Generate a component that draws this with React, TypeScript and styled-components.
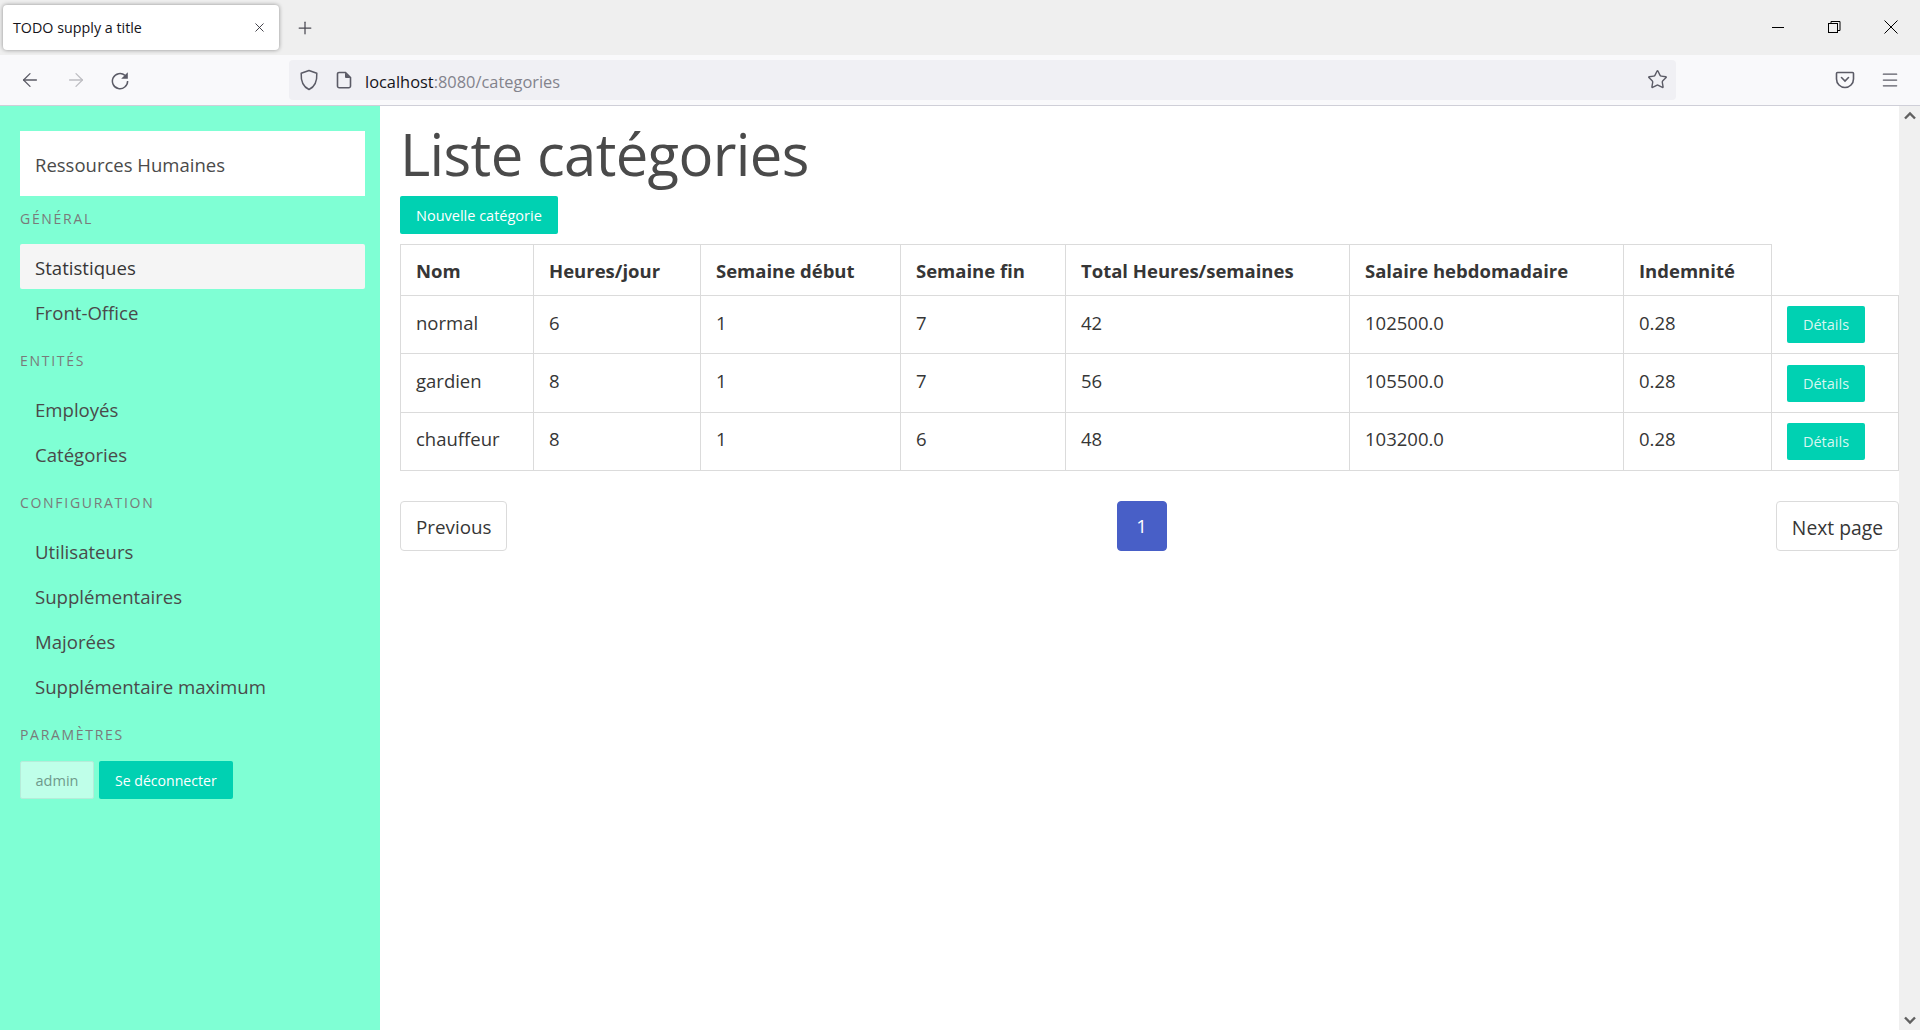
import React from "react";
import styled, { createGlobalStyle } from "styled-components";
import { ArrowLeft, ArrowRight, Menu, Plus, Star, X } from "lucide-react";

const GlobalStyle = createGlobalStyle`
  html, body {
    margin: 0;
    height: 100%;
    overflow: hidden;
    background: #fff;
    font-family: "Open Sans", "Noto Sans", sans-serif;
    color: #4a4a4a;
  }
  * { box-sizing: border-box; }
`;

interface Category {
  nom: string;
  heures: number;
  debut: number;
  fin: number;
  total: number;
  salaire: string;
  indemnite: string;
}

const categories: Category[] = [
  { nom: "normal", heures: 6, debut: 1, fin: 7, total: 42, salaire: "102500.0", indemnite: "0.28" },
  { nom: "gardien", heures: 8, debut: 1, fin: 7, total: 56, salaire: "105500.0", indemnite: "0.28" },
  { nom: "chauffeur", heures: 8, debut: 1, fin: 6, total: 48, salaire: "103200.0", indemnite: "0.28" },
];

const headers = ["Nom", "Heures/jour", "Semaine début", "Semaine fin", "Total Heures/semaines", "Salaire hebdomadaire", "Indemnité"];
const colWidths = [133, 167, 200, 165, 284, 274, 148, 127];

const menu = [
  { label: "Général", items: ["Statistiques", "Front-Office"] },
  { label: "Entités", items: ["Employés", "Catégories"] },
  { label: "Configuration", items: ["Utilisateurs", "Supplémentaires", "Majorées", "Supplémentaire maximum"] },
];

const App = () => {
  return (
    <>
      <GlobalStyle />
      <Page>
        <TabStrip>
          <Tab>
            <TabTitle>TODO supply a title</TabTitle>
            <X size={15} strokeWidth={1.4} color="#2b2a33" />
          </Tab>
          <NewTab>
            <Plus size={20} strokeWidth={1.5} color="#4a4952" />
          </NewTab>
          <WindowControls>
            <WindowButton>
              <svg width="16" height="16" viewBox="0 0 16 16"><path d="M2 8.5h12" stroke="#000" strokeWidth="1" /></svg>
            </WindowButton>
            <WindowButton>
              <svg width="16" height="16" viewBox="0 0 16 16" fill="none" stroke="#000" strokeWidth="1"><rect x="2.5" y="4.5" width="9" height="9" /><path d="M5 4.5V2.5h9v9h-2.5" /></svg>
            </WindowButton>
            <WindowButton>
              <svg width="16" height="16" viewBox="0 0 16 16"><path d="M1.5 1.5l13 13M14.5 1.5l-13 13" stroke="#000" strokeWidth="1" /></svg>
            </WindowButton>
          </WindowControls>
        </TabStrip>
        <Toolbar>
          <NavIcons>
            <ArrowLeft size={22} strokeWidth={1.4} color="#5b5b66" />
            <ArrowRight size={22} strokeWidth={1.4} color="#bdbdc2" />
            <svg width="20" height="20" viewBox="0 0 20 20" fill="none">
              <path d="M15 5.4A7.6 7.6 0 1 0 17.6 11" stroke="#5b5b66" strokeWidth="1.5" />
              <path d="M17.8 2.2v6.6h-6.6z" fill="#5b5b66" />
            </svg>
          </NavIcons>
          <UrlBar>
            <svg width="20" height="22" viewBox="0 0 20 22" fill="none" stroke="#5b5b66" strokeWidth="1.5">
              <path d="M10 1.5l7.8 2.8c.4 7.6-1.4 13.4-7.8 16.2C3.6 17.7 1.8 11.9 2.2 4.3z" strokeLinejoin="round" />
            </svg>
            <svg width="16" height="18" viewBox="0 0 16 18">
              <path d="M3 1.5h6.5l5 5V15a1.8 1.8 0 0 1-1.8 1.8H3.3A1.8 1.8 0 0 1 1.5 15V3A1.5 1.5 0 0 1 3 1.5z" fill="none" stroke="#5b5b66" strokeWidth="1.6" />
              <path d="M9 1.5l5.5 5.5H10a1 1 0 0 1-1-1z" fill="#5b5b66" />
            </svg>
            <UrlText>
              localhost<UrlMuted>:8080/categories</UrlMuted>
            </UrlText>
            <UrlEnd>
              <Star size={21} strokeWidth={1.6} color="#5b5b66" />
            </UrlEnd>
          </UrlBar>
          <PocketIcon>
            <svg width="20" height="20" viewBox="0 0 20 20" fill="none" stroke="#5b5b66" strokeWidth="1.6">
              <path d="M2.5 2.5h15c.6 0 1 .4 1 1V9a8.5 8.5 0 0 1-17 0V3.5c0-.6.4-1 1-1z" />
              <path d="M6.5 7.5l3.5 3.5 3.5-3.5" strokeLinecap="round" />
            </svg>
          </PocketIcon>
          <MenuIcon>
            <Menu size={20} strokeWidth={1.5} color="#5b5b66" />
          </MenuIcon>
        </Toolbar>
        <Body>
          <Sidebar>
            <Brand>Ressources Humaines</Brand>
            {menu.map((section, i) => (
              <React.Fragment key={section.label}>
                <MenuLabel $first={i === 0}>{section.label}</MenuLabel>
                {section.items.map((item) => (
                  <MenuItem key={item} $active={item === "Statistiques"}>
                    {item}
                  </MenuItem>
                ))}
              </React.Fragment>
            ))}
            <MenuLabel>Paramètres</MenuLabel>
            <UserRow>
              <AdminButton>admin</AdminButton>
              <LogoutButton>Se déconnecter</LogoutButton>
            </UserRow>
          </Sidebar>
          <Main>
            <Title>Liste catégories</Title>
            <PrimaryButton>Nouvelle catégorie</PrimaryButton>
            <Table>
              <colgroup>
                {colWidths.map((w, i) => (
                  <col key={i} style={{ width: w }} />
                ))}
              </colgroup>
              <thead>
                <tr>
                  {headers.map((h) => (
                    <Th key={h}>{h}</Th>
                  ))}
                  <EmptyTh />
                </tr>
              </thead>
              <tbody>
                {categories.map((c) => (
                  <Row key={c.nom}>
                    <Td>{c.nom}</Td>
                    <Td>{c.heures}</Td>
                    <Td>{c.debut}</Td>
                    <Td>{c.fin}</Td>
                    <Td>{c.total}</Td>
                    <Td>{c.salaire}</Td>
                    <Td>{c.indemnite}</Td>
                    <ActionTd>
                      <DetailButton>Détails</DetailButton>
                    </ActionTd>
                  </Row>
                ))}
              </tbody>
            </Table>
            <Pagination>
              <PageLink>Previous</PageLink>
              <CurrentPage>1</CurrentPage>
              <NextLink>Next page</NextLink>
            </Pagination>
          </Main>
          <Scrollbar>
            <svg width="14" height="10" viewBox="0 0 14 10"><path d="M2 7.5l5-5 5 5" fill="none" stroke="#606060" strokeWidth="2.4" /></svg>
            <svg width="14" height="10" viewBox="0 0 14 10"><path d="M2 2.5l5 5 5-5" fill="none" stroke="#606060" strokeWidth="2.4" /></svg>
          </Scrollbar>
        </Body>
      </Page>
    </>
  );
};

export default App;

const Page = styled.div`
  display: flex;
  flex-direction: column;
  height: 1030px;
`;

const TabStrip = styled.div`
  display: flex;
  align-items: flex-start;
  height: 55px;
  padding: 5px 0 0 3px;
  background: #efefef;
`;

const Tab = styled.div`
  display: flex;
  align-items: center;
  justify-content: space-between;
  width: 276px;
  height: 45px;
  padding: 0 12px 0 10px;
  background: #fff;
  border-radius: 4px;
  box-shadow: 0 0 4px rgba(0, 0, 0, 0.4);
`;

const TabTitle = styled.span`
  font-size: 14.3px;
  color: #15141a;
`;

const NewTab = styled.div`
  display: flex;
  align-items: center;
  justify-content: center;
  width: 20px;
  height: 45px;
  margin-left: 16px;
`;

const WindowControls = styled.div`
  display: flex;
  margin-left: auto;
  padding-right: 1px;
`;

const WindowButton = styled.div`
  display: flex;
  align-items: center;
  justify-content: center;
  width: 56.5px;
  height: 43px;
`;

const Toolbar = styled.div`
  display: flex;
  align-items: center;
  height: 51px;
  padding-bottom: 1px;
  background: #f9f9fb;
  border-bottom: 1px solid #cfcfd8;
`;

const NavIcons = styled.div`
  display: flex;
  align-items: center;
  gap: 23.5px;
  width: 289px;
  padding-left: 19px;
`;

const UrlBar = styled.div`
  display: flex;
  align-items: center;
  width: 1387px;
  height: 40px;
  padding: 0 8px 0 10px;
  background: #f0f0f4;
  border-radius: 4px;

  svg + svg {
    margin-left: 17px;
  }
`;

const UrlText = styled.span`
  margin-left: 13px;
  padding-top: 3px;
  font-size: 16.4px;
  color: #15141a;
`;

const UrlMuted = styled.span`
  color: #83838c;
`;

const UrlEnd = styled.div`
  display: flex;
  margin-left: auto;
`;

const PocketIcon = styled.div`
  display: flex;
  margin-left: 159px;
`;

const MenuIcon = styled.div`
  display: flex;
  margin-left: 25px;
`;

const Body = styled.div`
  display: flex;
  flex: 1;
  min-height: 0;
`;

const Sidebar = styled.aside`
  flex: 0 0 380px;
  padding: 25px 15px 0 20px;
  background: #7fffd4;
`;

const Brand = styled.div`
  display: flex;
  align-items: center;
  height: 65px;
  padding: 1px 0 0 15px;
  background: #fff;
  font-size: 18.5px;
`;

const MenuLabel = styled.p<{ $first?: boolean }>`
  height: 22px;
  margin: ${(p) => (p.$first ? "11px 0 15px" : "14.75px 0 15.5px")};
  font-size: 14px;
  line-height: 23px;
  letter-spacing: 1.7px;
  text-transform: uppercase;
  color: #7a7a7a;
`;

const MenuItem = styled.div<{ $active?: boolean }>`
  display: flex;
  align-items: center;
  height: 45px;
  padding: 1px 0 0 15px;
  font-size: 18.6px;
  border-radius: 2px;
  background: ${(p) => (p.$active ? "#f5f5f5" : "transparent")};
  color: ${(p) => (p.$active ? "#363636" : "#4a4a4a")};
`;

const UserRow = styled.div`
  display: flex;
  gap: 5px;
`;

const PrimaryButton = styled.button`
  display: inline-flex;
  align-items: center;
  height: 38px;
  padding: 0 16px;
  border: 0;
  border-radius: 2px;
  background: #00d1b2;
  color: #fff;
  font-family: inherit;
  font-size: 14.5px;
`;

const LogoutButton = styled(PrimaryButton)`
  padding-top: 1px;
  font-size: 14.1px;
`;

const AdminButton = styled.button`
  display: inline-flex;
  align-items: center;
  width: 74px;
  height: 38px;
  justify-content: center;
  padding: 1px 0 0;
  border: 1px solid #b5ecd9;
  border-radius: 2px;
  background: #bfffe9;
  color: #6f9a8c;
  font-family: inherit;
  font-size: 14.5px;
`;

const Main = styled.main`
  flex: 1;
  min-width: 0;
  padding-left: 20px;
`;

const Title = styled.h1`
  margin: 0;
  height: 90px;
  font-size: 58px;
  font-weight: 400;
  line-height: 96px;
  letter-spacing: -0.65px;
  color: #4a4a4a;
`;

const Table = styled.table`
  width: 1498px;
  margin-top: 10px;
  table-layout: fixed;
  border-collapse: collapse;
  font-size: 18.5px;
  color: #363636;
`;

const Th = styled.th`
  height: 51px;
  padding: 0 15px;
  border: 1px solid #dbdbdb;
  text-align: left;
  font-weight: 700;
  white-space: nowrap;
`;

const EmptyTh = styled.th`
  border-bottom: 1px solid #dbdbdb;
`;

const Row = styled.tr`
  height: 58.4px;
`;

const Td = styled.td`
  padding: 0 15px 5px;
  border: 1px solid #dbdbdb;
  vertical-align: middle;
`;

const ActionTd = styled.td`
  padding: 0 15px;
  border: 1px solid #dbdbdb;
  vertical-align: middle;
`;

const DetailButton = styled(PrimaryButton)`
  display: flex;
  width: 78px;
  height: 37px;
  justify-content: center;
  padding: 0;
  color: rgba(255, 255, 255, 0.85);
`;

const Pagination = styled.nav`
  display: flex;
  justify-content: space-between;
  margin-top: 30px;
`;

const PageLink = styled.a`
  display: flex;
  align-items: center;
  justify-content: center;
  height: 50px;
  padding: 2px 15px 0;
  border: 1px solid #dbdbdb;
  border-radius: 4px;
  font-size: 18.8px;
  color: #363636;
`;

const NextLink = styled(PageLink)`
  font-size: 19.3px;
`;

const CurrentPage = styled(PageLink)`
  width: 50px;
  padding: 0;
  border-color: #485fc7;
  background: #485fc7;
  color: #fff;
`;

const Scrollbar = styled.div`
  display: flex;
  flex: 0 0 21px;
  flex-direction: column;
  align-items: center;
  justify-content: space-between;
  padding: 5px 0;
  background: #f0f0f0;
`;
